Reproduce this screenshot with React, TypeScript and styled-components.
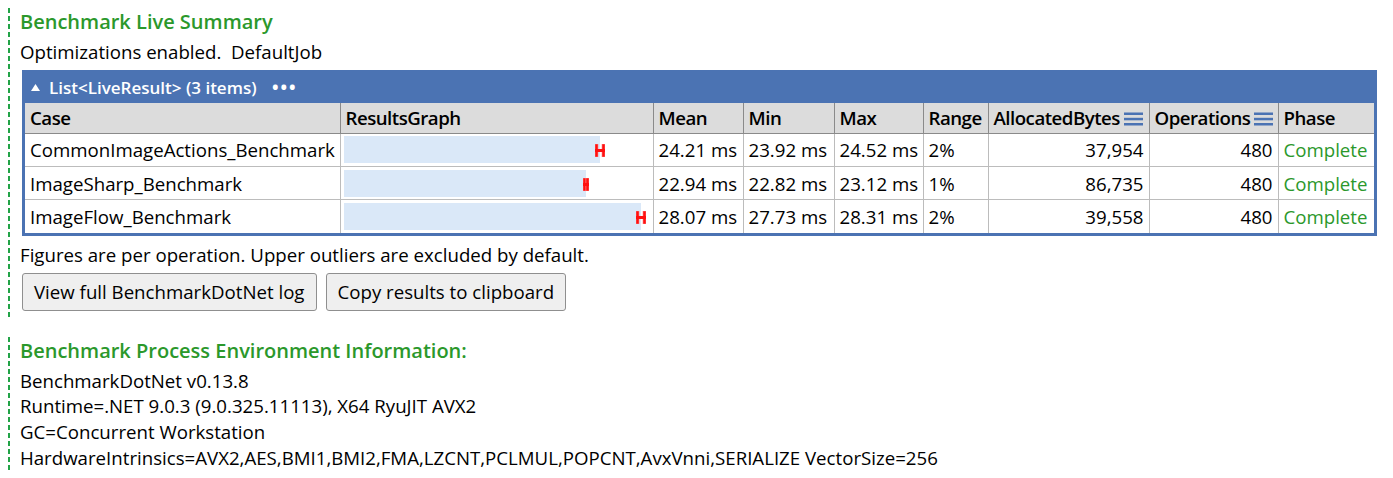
import React from 'react';
import styled, { createGlobalStyle } from 'styled-components';

const FONT = `"Segoe UI", "Open Sans", "Noto Sans", sans-serif`;
const BLUE = '#4b73b3';
const GREEN = '#2b982b';

const GlobalStyle = createGlobalStyle`
  body {
    margin: 8px;
    font-family: ${FONT};
    font-size: 18.67px;
    color: #000;
    background: #fff;
  }
`;

const Section = styled.section<{ $last?: boolean }>`
  padding-left: 12px;
  padding-bottom: ${(p) => (p.$last ? '0' : '7px')};
  margin-bottom: ${(p) => (p.$last ? '0' : '19px')};
  background-image: repeating-linear-gradient(to bottom, #22a347 0 5px, transparent 5px 8px);
  background-size: 2px 100%;
  background-repeat: no-repeat;
  background-position: left top;
`;

const Heading = styled.h2`
  margin: 0 0 4px 0;
  color: ${GREEN};
  font-size: 20px;
  font-weight: 600;
  line-height: 27px;
`;

const Line = styled.div`
  line-height: 25.67px;
  white-space: pre;
`;

const Grid = styled.div`
  width: max-content;
  margin: 5px 0 6px 2px;
  border: 3px solid ${BLUE};
  background: ${BLUE};
`;

const GridBar = styled.div`
  height: 30px;
  display: flex;
  align-items: center;
  gap: 9px;
  padding-left: 6px;
  color: #fff;
  font-size: 17px;
  font-weight: 600;
`;

const Dots = styled.span`
  margin-left: 6px;
  letter-spacing: 1px;
  font-size: 20px;
  line-height: 1;
`;

const Table = styled.table`
  width: 1349px;
  table-layout: fixed;
  border-collapse: collapse;
  background: #fff;
`;

const Th = styled.th`
  background: #dcdcdc;
  height: 30px;
  padding: 0 5px;
  text-align: left;
  font-weight: 600;
  letter-spacing: -0.5px;
  border-left: 1px solid #8a8a8a;
  border-bottom: 1px solid #8a8a8a;
  white-space: nowrap;
  &:first-child { border-left: none; }
`;

const Td = styled.td<{ $align?: 'right' | 'left'; $green?: boolean }>`
  height: 32.4px;
  padding: 0 5px;
  text-align: ${(p) => p.$align ?? 'left'};
  color: ${(p) => (p.$green ? GREEN : '#000')};
  border-left: 1px solid #bcbcbc;
  border-top: 1px solid #bcbcbc;
  white-space: nowrap;
  &:first-child { border-left: none; }
`;

const GraphTd = styled(Td)`
  padding: 0 3px;
`;

const GraphCell = styled.div`
  position: relative;
  height: 27px;
`;

const Bar = styled.div`
  height: 27px;
  background: #dae8f8;
`;

const ErrorMark = styled.svg`
  position: absolute;
  top: 8px;
`;

const MenuIcon = () => (
  <svg width="19" height="14" viewBox="0 0 19 14" style={{ marginLeft: 4, verticalAlign: -1 }}>
    <rect x="0" y="0.5" width="19" height="2.5" fill={BLUE} />
    <rect x="0" y="5.8" width="19" height="2.5" fill={BLUE} />
    <rect x="0" y="11" width="19" height="2.5" fill={BLUE} />
  </svg>
);

const Buttons = styled.div`
  display: flex;
  gap: 9px;
  margin-top: 5px;
  margin-left: 2px;
`;

const Button = styled.button`
  height: 38px;
  padding: 0 11px;
  font-family: ${FONT};
  font-size: 18.67px;
  color: #000;
  background: #efefef;
  border: 1px solid #8f8f8f;
  border-radius: 3px;
`;

type Row = {
  name: string;
  bar: number;
  markX: number;
  markW: number;
  mean: string;
  min: string;
  max: string;
  range: string;
  bytes: string;
  ops: string;
};

const rows: Row[] = [
  { name: 'CommonImageActions_Benchmark', bar: 256, markX: 251, markW: 10, mean: '24.21 ms', min: '23.92 ms', max: '24.52 ms', range: '2%', bytes: '37,954', ops: '480' },
  { name: 'ImageSharp_Benchmark', bar: 242, markX: 239, markW: 6, mean: '22.94 ms', min: '22.82 ms', max: '23.12 ms', range: '1%', bytes: '86,735', ops: '480' },
  { name: 'ImageFlow_Benchmark', bar: 297, markX: 292, markW: 10, mean: '28.07 ms', min: '27.73 ms', max: '28.31 ms', range: '2%', bytes: '39,558', ops: '480' },
];

const Mark = ({ x, w }: { x: number; w: number }) => (
  <ErrorMark width={w} height={13} viewBox={`0 0 ${w} 13`} style={{ left: x }}>
    <rect x="0" y="0" width="3" height="13" fill="#ff1010" stroke="#ff8080" strokeWidth="0.6" />
    <rect x={w - 3} y="0" width="3" height="13" fill="#ff1010" stroke="#ff8080" strokeWidth="0.6" />
    <rect x="0" y="5" width={w} height="3" fill="#ff1010" />
  </ErrorMark>
);

const widths = [315, 313, 90, 91, 89, 65, 161, 129, 96];

export default function App() {
  return (
    <>
      <GlobalStyle />
      <Section>
        <Heading>Benchmark Live Summary</Heading>
        <Line>Optimizations enabled.  DefaultJob</Line>
        <Grid>
          <GridBar>
            <svg width="9" height="7" viewBox="0 0 9 7"><polygon points="4.5,0 9,7 0,7" fill="#fff" /></svg>
            <span>List&lt;LiveResult&gt; (3 items)</span>
            <Dots>•••</Dots>
          </GridBar>
          <Table>
            <colgroup>
              {widths.map((w, i) => (
                <col key={i} style={{ width: w }} />
              ))}
            </colgroup>
            <thead>
              <tr>
                <Th>Case</Th>
                <Th>ResultsGraph</Th>
                <Th>Mean</Th>
                <Th>Min</Th>
                <Th>Max</Th>
                <Th>Range</Th>
                <Th>AllocatedBytes<MenuIcon /></Th>
                <Th>Operations<MenuIcon /></Th>
                <Th>Phase</Th>
              </tr>
            </thead>
            <tbody>
              {rows.map((r) => (
                <tr key={r.name}>
                  <Td>{r.name}</Td>
                  <GraphTd>
                    <GraphCell>
                      <Bar style={{ width: r.bar }} />
                      <Mark x={r.markX} w={r.markW} />
                    </GraphCell>
                  </GraphTd>
                  <Td>{r.mean}</Td>
                  <Td>{r.min}</Td>
                  <Td>{r.max}</Td>
                  <Td>{r.range}</Td>
                  <Td $align="right">{r.bytes}</Td>
                  <Td $align="right">{r.ops}</Td>
                  <Td $green>Complete</Td>
                </tr>
              ))}
            </tbody>
          </Table>
        </Grid>
        <Line>Figures are per operation. Upper outliers are excluded by default.</Line>
        <Buttons>
          <Button>View full BenchmarkDotNet log</Button>
          <Button>Copy results to clipboard</Button>
        </Buttons>
      </Section>
      <Section $last>
        <Heading>Benchmark Process Environment Information:</Heading>
        <Line>BenchmarkDotNet v0.13.8</Line>
        <Line>Runtime=.NET 9.0.3 (9.0.325.11113), X64 RyuJIT AVX2</Line>
        <Line>GC=Concurrent Workstation</Line>
        <Line>HardwareIntrinsics=AVX2,AES,BMI1,BMI2,FMA,LZCNT,PCLMUL,POPCNT,AvxVnni,SERIALIZE VectorSize=256</Line>
      </Section>
    </>
  );
}
